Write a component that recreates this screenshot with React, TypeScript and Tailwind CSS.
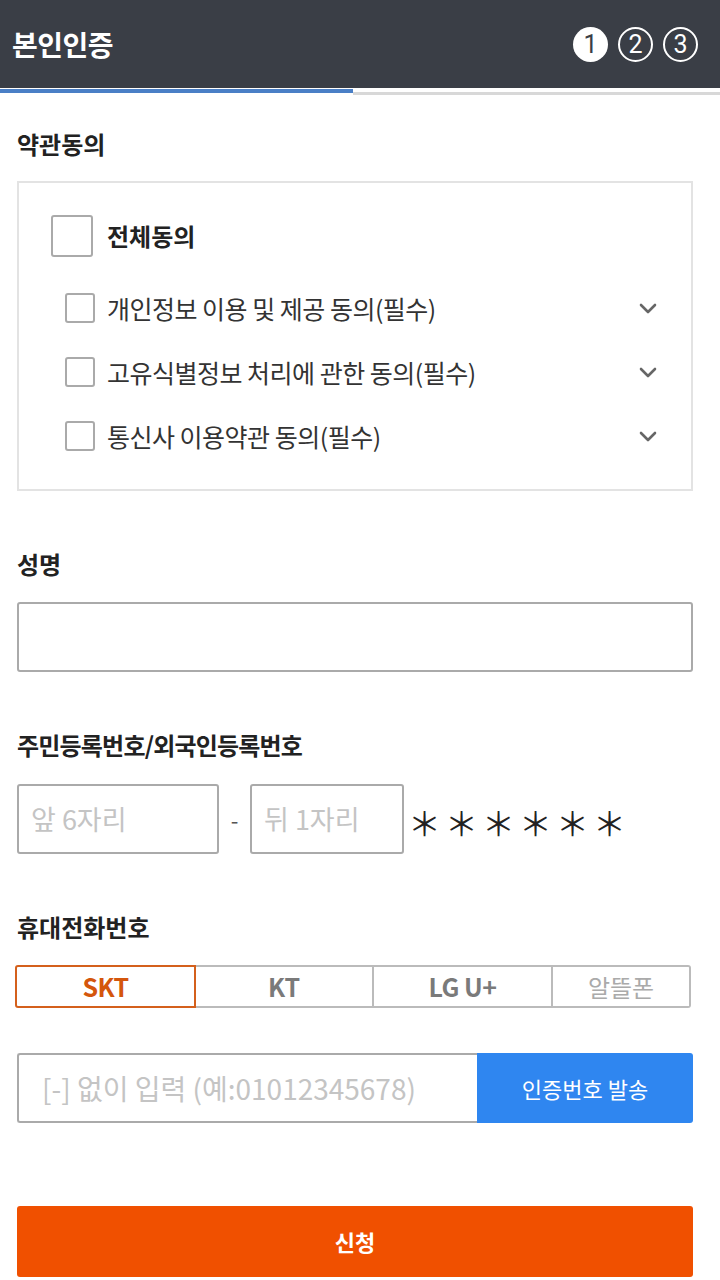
import React from 'react';

const font = { fontFamily: '"Noto Sans CJK KR", "Noto Sans", sans-serif' };

const Chevron: React.FC = () => (
  <svg width="18" height="11" viewBox="0 0 18 11" fill="none">
    <path d="M2 2l7 7 7-7" stroke="#666" strokeWidth="2.6" strokeLinecap="round" strokeLinejoin="round" />
  </svg>
);

const Step: React.FC<{ n: number; active?: boolean }> = ({ n, active }) => (
  <div
    className={
      active
        ? 'w-[35px] h-[35px] rounded-full bg-white text-[#3a3e46] flex items-center justify-center text-[25px] leading-none'
        : 'w-[35px] h-[35px] rounded-full border-2 border-white text-white flex items-center justify-center text-[25px] leading-none'
    }
    style={{ fontFamily: 'Roboto, "Liberation Sans", sans-serif' }}
  >
    {n}
  </div>
);

const terms = ['개인정보 이용 및 제공 동의(필수)', '고유식별정보 처리에 관한 동의(필수)', '통신사 이용약관 동의(필수)'];

export default function App() {
  return (
    <div className="w-[720px] min-h-[1280px] bg-white text-[#222]" style={font}>
      {/* Header */}
      <div className="h-[88px] bg-[#3a3e46] flex items-center justify-between pl-[12px] pr-[22px]">
        <h1 className="text-white text-[28px] font-bold tracking-[-0.5px]">본인인증</h1>
        <div className="flex gap-[10px]">
          <Step n={1} active />
          <Step n={2} />
          <Step n={3} />
        </div>
      </div>
      {/* Progress */}
      <div className="flex h-[8px]">
        <div className="w-[353px] h-[4px] mt-[1px] bg-[#4a7fc6]" />
        <div className="flex-1 h-[3px] mt-[4px] bg-[#d8d8d8]" />
      </div>

      <div className="pl-[17px] pr-[27px]">
        {/* 약관동의 */}
        <div className="mt-[32px] text-[24px] font-bold leading-[32px]">약관동의</div>
        <div className="mt-[21px] border-2 border-[#e3e3e3] pt-[32px] pb-[21px] pl-[32px] pr-[34px]">
          <div className="flex items-center gap-[14px]">
            <div className="w-[42px] h-[42px] border-2 border-[#aaa] rounded-[3px]" />
            <span className="text-[24px] font-bold leading-[42px]">전체동의</span>
          </div>
          <div className="mt-[19px]">
            {terms.map((t) => (
              <div key={t} className="h-[64px] flex items-center pl-[14px]">
                <div className="w-[30px] h-[30px] border-2 border-[#aaa] rounded-[3px]" />
                <span className="ml-[12px] text-[25px] leading-[34px] text-[#333] flex-1 tracking-[-0.5px]">{t}</span>
                <Chevron />
              </div>
            ))}
          </div>
        </div>

        {/* 성명 */}
        <div className="mt-[57px] text-[24px] font-bold leading-[32px]">성명</div>
        <div className="mt-[22px] h-[70px] border-2 border-[#aaa] rounded-[3px]" />

        {/* 주민등록번호 */}
        <div className="mt-[57px] text-[24px] font-bold leading-[32px] tracking-[-0.8px]">주민등록번호/외국인등록번호</div>
        <div className="mt-[23px] flex items-center">
          <div className="w-[202px] h-[70px] border-2 border-[#aaa] rounded-[3px] flex items-center pl-[12px] text-[27px] text-[#c4c4c4]">
            앞 6자리
          </div>
          <span className="w-[31px] text-center text-[22px] text-[#555]">-</span>
          <div className="w-[154px] h-[70px] border-2 border-[#aaa] rounded-[3px] flex items-center pl-[12px] text-[27px] text-[#c4c4c4]">
            뒤 1자리
          </div>
          <div className="ml-[2px] flex text-[33px] leading-none text-[#222] pt-[6px]">
            {[0, 1, 2, 3, 4, 5].map((i) => (
              <span key={i} className="w-[37px] text-center">＊</span>
            ))}
          </div>
        </div>

        {/* 휴대전화번호 */}
        <div className="mt-[57px] text-[24px] font-bold leading-[32px]">휴대전화번호</div>
        <div className="mt-[22px] -ml-[2px] flex h-[43px]">
          <div className="w-[181px] border-2 border-[#d4601c] rounded-l-[3px] flex items-center justify-center text-[25px] font-bold text-[#d4560c] tracking-[-0.5px]">SKT</div>
          <div className="w-[178px] border-y-2 border-r-2 border-[#bbb] flex items-center justify-center text-[25px] font-bold text-[#7a7a7a]">KT</div>
          <div className="w-[179px] border-y-2 border-r-2 border-[#bbb] flex items-center justify-center text-[25px] font-bold text-[#7a7a7a] tracking-[-0.5px]">LG U+</div>
          <div className="w-[138px] border-y-2 border-r-2 border-[#bbb] rounded-r-[3px] flex items-center justify-center text-[24px] text-[#aaa]">알뜰폰</div>
        </div>
        <div className="mt-[45px] flex h-[70px]">
          <div className="w-[460px] border-2 border-r-0 border-[#aaa] rounded-l-[3px] flex items-center pl-[23px] text-[28px] text-[#c4c4c4]">
            [-] 없이 입력 (예:01012345678)
          </div>
          <button className="flex-1 bg-[#2f86f0] rounded-r-[3px] text-white text-[22px]">인증번호 발송</button>
        </div>

        {/* 신청 */}
        <button className="mt-[83px] w-full h-[71px] bg-[#f05000] rounded-[3px] text-white text-[22px] font-bold">신청</button>
      </div>
    </div>
  );
}
